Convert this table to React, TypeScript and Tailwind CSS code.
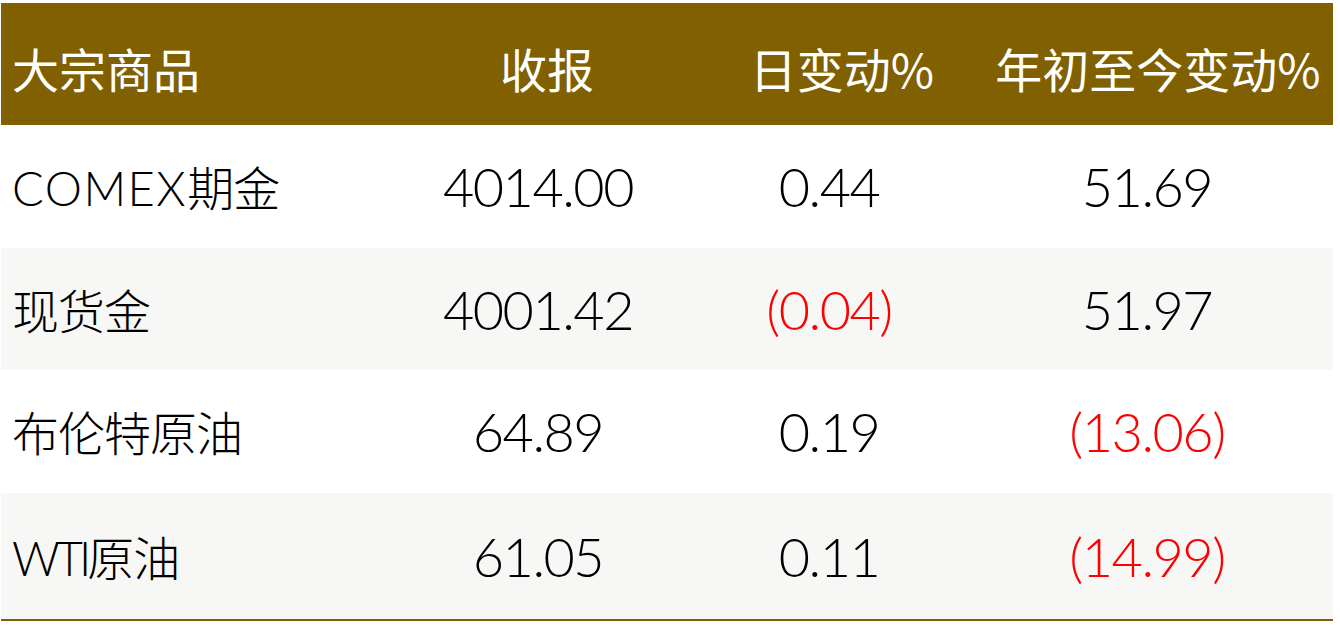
const rows = [
  { latin: "COMEX", cjk: "期金", track: "tracking-[1.5px]", close: "4014.00", day: "0.44", ytd: "51.69", bg: "bg-white", h: "h-[123px]" },
  { latin: "", cjk: "现货金", track: "", close: "4001.42", day: "(0.04)", ytd: "51.97", bg: "bg-[#f7f7f5]", h: "h-[122px]" },
  { latin: "", cjk: "布伦特原油", track: "", close: "64.89", day: "0.19", ytd: "(13.06)", bg: "bg-white", h: "h-[123px]" },
  { latin: "WTI", cjk: "原油", track: "tracking-[-4px]", close: "61.05", day: "0.11", ytd: "(14.99)", bg: "bg-[#f7f7f5]", h: "h-[126px]" },
];

const font = "font-['Lato','Noto_Sans_CJK_SC',sans-serif]";

// accounting style: positives keep invisible parens so the digits line up
function Pct({ value }: { value: string }) {
  const neg = value.startsWith("(");
  if (neg) return <span className="text-[#ff0000]">{value}</span>;
  return (
    <span>
      <span className="invisible">(</span>
      {value}
      <span className="invisible">)</span>
    </span>
  );
}

export default function App() {
  return (
    <div className="min-h-screen bg-white pt-[3px] pl-px">
      <div className={`w-[1332px] ${font}`}>
        <div className="grid h-[122px] grid-cols-[394px_286px_314px_1fr] items-center bg-[#806000] pt-[8px] text-[47px] text-white font-['Noto_Sans_CJK_SC',sans-serif]">
          <div className="pl-[11px]">大宗商品</div>
          <div className="pl-[18px] text-center">收报</div>
          <div className="pl-[8px] text-center">日变动%</div>
          <div className="pr-[12px] text-center">年初至今变动%</div>
        </div>
        {rows.map((r) => (
          <div
            key={r.cjk}
            className={`grid grid-cols-[394px_286px_314px_1fr] items-center font-light text-black ${r.h} ${r.bg}`}
          >
            <div className="pl-[11px] pt-[4px] text-[47px]">
              {r.latin && <span className={r.track}>{r.latin}</span>}
              <span className="tracking-[-1px]">{r.cjk}</span>
            </div>
            <div className="text-center text-[54px] tracking-[-1.5px]">{r.close}</div>
            <div className="pr-[18px] text-center text-[54px] tracking-[-1.5px]">
              <Pct value={r.day} />
            </div>
            <div className="pr-[34px] text-center text-[54px] tracking-[-1.5px]">
              <Pct value={r.ytd} />
            </div>
          </div>
        ))}
        <div className="h-[2px] bg-[#806000]" />
      </div>
    </div>
  );
}
